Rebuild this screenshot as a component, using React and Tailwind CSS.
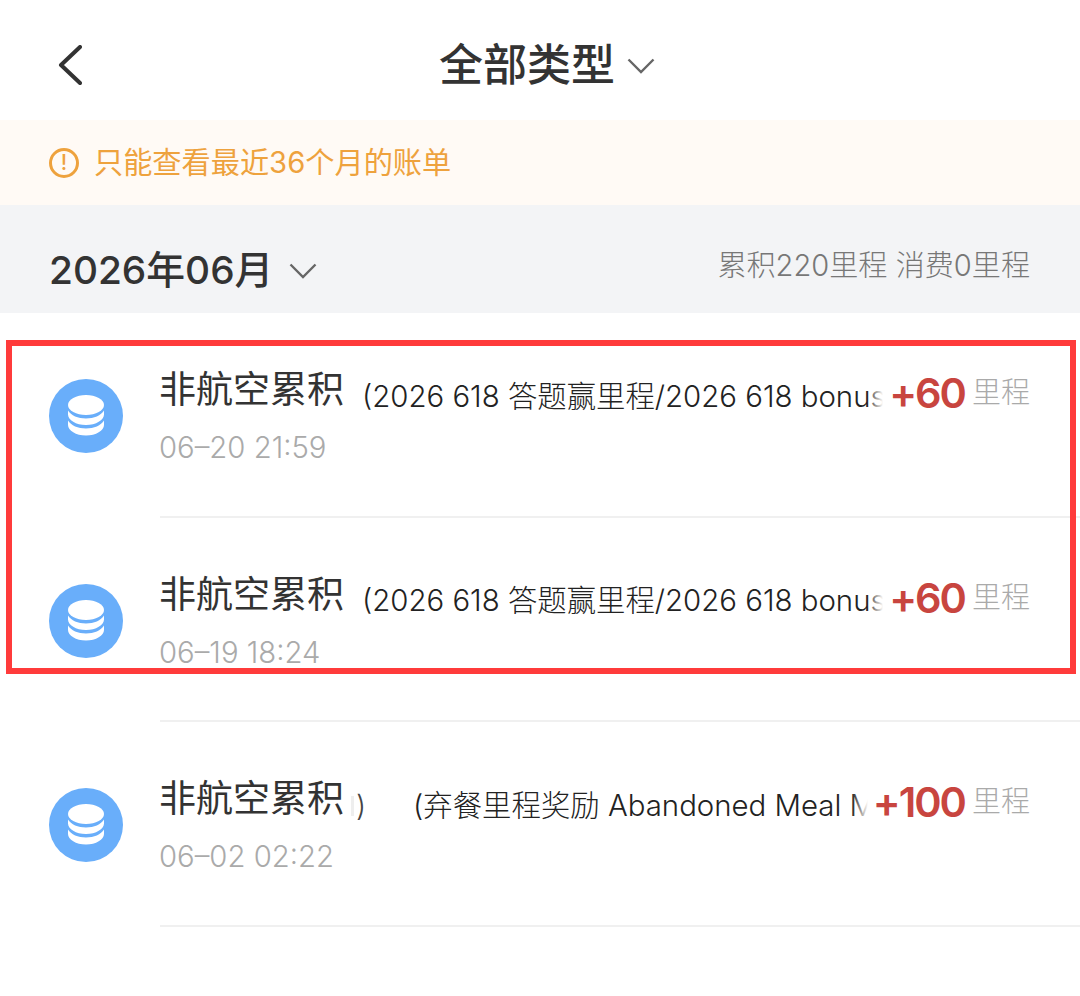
const FONT = "font-['Inter','Noto_Sans_CJK_SC',sans-serif]";

const rows = [
    {
        date: "06–20 21:59",
        desc: "(2026 618 答题赢里程/2026 618 bonus",
        amount: "+60",
    },
    {
        date: "06–19 18:24",
        desc: "(2026 618 答题赢里程/2026 618 bonus",
        amount: "+60",
    },
    {
        date: "06–02 02:22",
        desc: "(弃餐里程奖励 Abandoned Meal M",
        amount: "+100",
        extra: true,
    },
];

const Chevron = ({ className }) => (
    <svg className={className} viewBox="0 0 28 16" fill="none">
        <polyline
            points="1.5,1.5 14,14 26.5,1.5"
            stroke="#666"
            strokeWidth="2.4"
        />
    </svg>
);

const CoinIcon = () => (
    <svg className="w-[74px] h-[74px] shrink-0" viewBox="0 0 74 74">
        <circle cx="37" cy="37" r="37" fill="#69aefa" />
        <ellipse cx="37" cy="26" rx="18" ry="10" fill="#fff" />
        <path
            d="M19 31.500v4c0 5.500 8 10.500 18 10.500s18-5 18-10.500v-4c-3 5-10 8-18 8s-15-3-18-8z"
            fill="#fff"
        />
        <path
            d="M19 41.500v4.500c0 5.500 8 10.500 18 10.500s18-5 18-10.500v-4.500c-3 5-10 8-18 8s-15-3-18-8z"
            fill="#fff"
        />
    </svg>
);

const Row = ({ date, desc, amount, extra }) => (
    <div className="flex items-start h-[204.5px] pl-[49px]">
        <div className="mt-[66px]">
            <CoinIcon />
        </div>
        <div className="flex-1 min-w-0 ml-[37px] border-b-2 border-[#f0f0f0] h-full pt-[50px]">
            <div className="flex items-center h-[54px] pr-[50px]">
                <span className="-ml-[1px] text-[37px] leading-[54px] text-[#333] whitespace-nowrap shrink-0">
                    非航空累积
                </span>
                {extra && (
                    <>
                        <div className="w-[3px] h-[20px] bg-[#eee] ml-[7px] mt-[14px] shrink-0" />
                        <span className="text-[29px] font-light text-[#444] ml-[2px] mt-[14px] shrink-0">
                            )
                        </span>
                    </>
                )}
                <div
                    className={
                        extra
                            ? "relative flex-1 min-w-0 overflow-hidden whitespace-nowrap text-[29.400px] leading-[40px] font-light text-[#222] mt-[13px] ml-[47px] mr-[5px]"
                            : "relative flex-1 min-w-0 overflow-hidden whitespace-nowrap text-[29.400px] leading-[40px] font-light text-[#222] mt-[13px] ml-[18px] mr-[6px]"
                    }
                >
                    {desc}
                    <div className="absolute right-0 top-0 bottom-0 w-[16px] bg-gradient-to-r from-transparent to-white" />
                </div>
                <span className="text-[41.500px] leading-[54px] font-semibold tracking-[-2px] text-[#c8453f] mt-[6px] shrink-0">
                    {amount}
                </span>
                <span className="text-[29px] leading-[54px] font-light text-[#aaa] ml-[7px] mt-[6px] shrink-0">
                    里程
                </span>
            </div>
            <p className="-ml-[1px] text-[29.300px] leading-[40px] font-light text-[#aaa] mt-[11px]">
                {date}
            </p>
        </div>
    </div>
);

const App = () => {
    return (
        <div className={`relative w-[1080px] h-[996px] bg-white overflow-hidden ${FONT}`}>
            {/* cabecalho */}
            <div className="flex items-center h-[120px] pl-[58px] pt-[10px]">
                <svg className="w-[24px] h-[40px] shrink-0" viewBox="0 0 24 40" fill="none">
                    <polyline
                        points="22,2 3,20 22,38"
                        stroke="#333"
                        strokeWidth="4"
                        strokeLinecap="round"
                        strokeLinejoin="round"
                    />
                </svg>
                <span className="ml-[357px] text-[44px] font-medium text-[#333] whitespace-nowrap">
                    全部类型
                </span>
                <Chevron className="w-[28px] h-[16px] ml-[12px] mt-[2px]" />
            </div>

            {/* aviso */}
            <div className="flex items-center h-[85px] bg-[#fffaf5] pl-[49px]">
                <div className="w-[30px] h-[30px] rounded-full border-[3px] border-[#eea23d] flex items-center justify-center text-[#eea23d] text-[21px] font-medium leading-none shrink-0">
                    !
                </div>
                <span className="ml-[15px] text-[29.200px] text-[#eea23d] whitespace-nowrap">
                    只能查看最近36个月的账单
                </span>
            </div>

            {/* mes */}
            <div className="flex items-center justify-between h-[108px] bg-[#f3f4f6] pl-[49px] pr-[50px] pt-[22px]">
                <div className="flex items-center">
                    <span className="text-[38.800px] font-medium text-[#333] whitespace-nowrap">
                        2026年06月
                    </span>
                    <Chevron className="w-[28px] h-[16px] ml-[16px] mt-[2px]" />
                </div>
                <span className="text-[29.100px] font-light text-[#777] whitespace-nowrap -mt-[8px]">
                    累积220里程 消费0里程
                </span>
            </div>

            {/* lista */}
            <div>
                {rows.map((r) => (
                    <Row key={r.date} {...r} />
                ))}
            </div>

            {/* marcacao vermelha */}
            <div className="absolute left-[6px] top-[340px] w-[1070px] h-[334px] border-[6px] border-[#ff3b3b] pointer-events-none" />
        </div>
    );
};

export default App;
